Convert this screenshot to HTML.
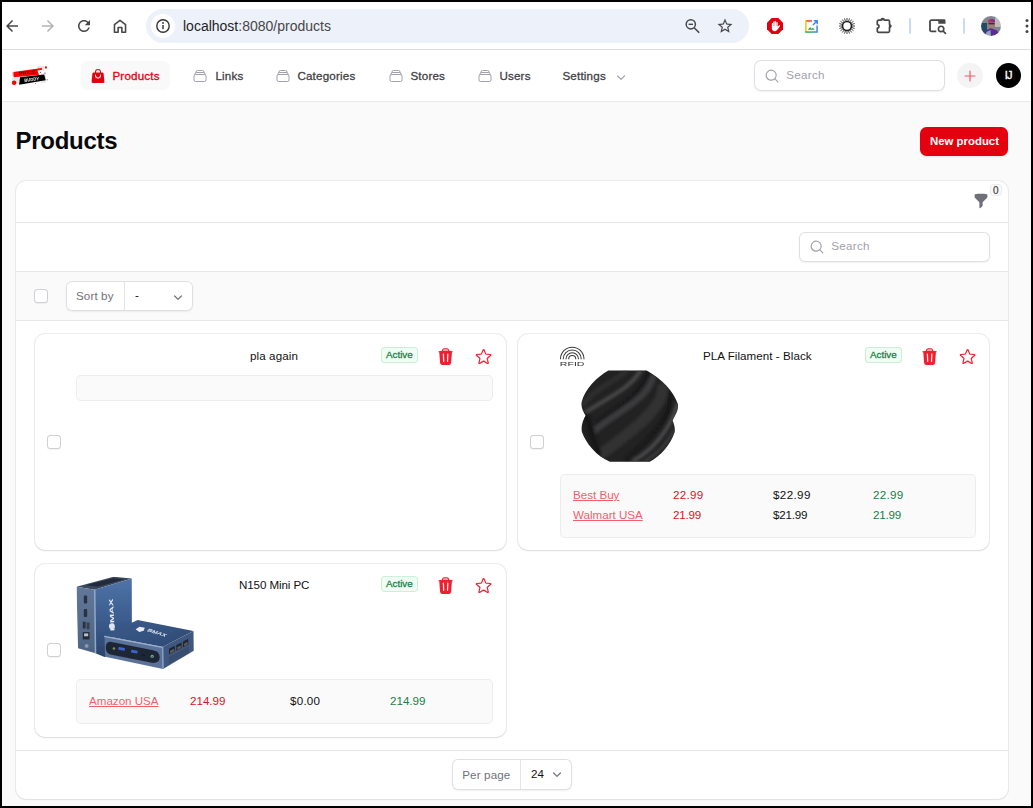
<!DOCTYPE html>
<html lang="en">
<head>
<meta charset="utf-8">
<title>Products</title>
<style>
*{box-sizing:border-box;margin:0;padding:0}
html,body{width:1033px;height:808px;overflow:hidden;background:#000}
body{font-family:"Liberation Sans",Arial,sans-serif;position:relative;color:#18181b}
.abs{position:absolute}
#win{position:absolute;left:2px;top:2px;width:1029px;height:804px;background:#fafafa;overflow:hidden}
/* everything inside #win positioned with page coordinates minus 2 */
#pg{position:absolute;left:-2px;top:-2px;width:1033px;height:808px}
#chrome{position:absolute;left:0;top:0;width:1033px;height:49px;background:#fff}
#chromeline{position:absolute;left:0;top:49px;width:1033px;height:1px;background:#dcdcdc}
#urlpill{position:absolute;left:146px;top:9px;width:603px;height:34px;border-radius:17px;background:#edf1fa}
#infoc{position:absolute;left:151px;top:14px;width:24px;height:24px;border-radius:12px;background:#fff}
.t{position:absolute;white-space:nowrap;line-height:1}
#nav{position:absolute;left:0;top:50px;width:1033px;height:51px;background:#fff}
#navline{position:absolute;left:0;top:101px;width:1033px;height:1px;background:#e9e9eb}
.navt{font-size:11.6px;font-weight:400;color:#3f3f46;-webkit-text-stroke:.3px currentColor;letter-spacing:.2px;margin-left:.4px}
svg{position:absolute;overflow:visible;z-index:2}
.t{z-index:3}
#panel{position:absolute;left:16px;top:181px;width:992px;height:618px;background:#fff;border-radius:10px;box-shadow:0 0 0 1px rgba(9,9,11,.06),0 1px 2px rgba(0,0,0,.05)}
.hl{position:absolute;left:16px;width:992px;height:1px;background:#e7e7ea}
.card{position:absolute;background:#fff;border-radius:10px;box-shadow:0 0 0 1px rgba(9,9,11,.07),0 1px 2px rgba(0,0,0,.08)}
.inner{position:absolute;background:#fafafa;border-radius:5px;box-shadow:inset 0 0 0 1px rgba(9,9,11,.06)}
.cb{position:absolute;width:14px;height:14px;border-radius:3.5px;background:#fff;box-shadow:inset 0 0 0 1px #cfcfd4,0 1px 1px rgba(0,0,0,.05)}
.inp{position:absolute;background:#fff;border-radius:6px;box-shadow:inset 0 0 0 1px #e0e0e4,0 1px 2px rgba(0,0,0,.06)}
.badge{position:absolute;width:37px;height:16px;border-radius:4px;background:#f0fdf4;box-shadow:inset 0 0 0 1px #cdeed9}
.b{font-size:11.6px;color:#111}
.lnk{font-size:11.6px;color:#f0606c;text-decoration:underline;text-underline-offset:1px}
.red{font-size:11.6px;color:#e0101f;letter-spacing:.12px}
.grn{font-size:11.6px;color:#168046;letter-spacing:.12px}
</style>
</head>
<body>
<div id="win"><div id="pg">

<!-- ===== browser chrome ===== -->
<div id="chrome"></div>
<div id="chromeline"></div>
<div id="urlpill"></div>
<div id="infoc"></div>
<span class="t" id="url" style="left:183px;top:19px;font-size:14px;color:#1f1f1f">localhost<span style="color:#474747">:8080/products</span></span>


<!-- chrome icons -->
<svg style="left:3px;top:17px" width="18" height="18" viewBox="0 0 24 24"><path fill="#474747" d="M20 11H7.83l5.59-5.59L12 4l-8 8 8 8 1.41-1.41L7.83 13H20v-2z"/></svg>
<svg style="left:39px;top:17px" width="18" height="18" viewBox="0 0 24 24"><path fill="#b4b4b4" d="M4 11h12.17l-5.59-5.59L12 4l8 8-8 8-1.41-1.41L16.17 13H4v-2z"/></svg>
<svg style="left:75px;top:17px" width="18" height="18" viewBox="0 0 24 24"><path fill="#474747" d="M17.65 6.35C16.2 4.9 14.21 4 12 4c-4.42 0-7.99 3.58-7.99 8s3.57 8 7.99 8c3.73 0 6.84-2.55 7.73-6h-2.08c-.82 2.33-3.04 4-5.65 4-3.31 0-6-2.69-6-6s2.69-6 6-6c1.66 0 3.14.69 4.22 1.78L13 11h7V4l-2.35 2.35z"/></svg>
<svg style="left:111px;top:17px" width="18" height="18" viewBox="0 0 24 24"><path fill="none" stroke="#474747" stroke-width="2.1" stroke-linejoin="round" d="M4.6 20.4V10.2L12 4.4l7.4 5.800V20.4h-4.9v-6.3h-5v6.3z"/></svg>
<svg style="left:155px;top:18px" width="16" height="16" viewBox="0 0 16 16"><circle cx="8" cy="8" r="6.2" fill="none" stroke="#333" stroke-width="1.4"/><rect x="7.3" y="7" width="1.4" height="4.2" fill="#333"/><circle cx="8" cy="5" r=".9" fill="#333"/></svg>
<svg style="left:684px;top:18px" width="17" height="17" viewBox="0 0 17 17"><circle cx="6.8" cy="6.3" r="4.6" fill="none" stroke="#474747" stroke-width="1.5"/><path d="M10.2 9.8l5 5" stroke="#474747" stroke-width="1.6" fill="none"/><path d="M4.6 6.3h4.4" stroke="#474747" stroke-width="1.4"/></svg>
<svg style="left:716px;top:17px" width="18" height="18" viewBox="0 0 24 24"><path fill="#474747" d="M22 9.24l-7.19-.62L12 2 9.190 8.630 2 9.240l5.460 4.730L5.820 21 12 17.270 18.180 21l-1.630-7.030L22 9.240zM12 15.400l-3.760 2.270 1-4.280-3.320-2.880 4.380-.38L12 6.100l1.710 4.040 4.380.38-3.320 2.880 1 4.280L12 15.400z"/></svg>
<!-- adblock -->
<svg style="left:767px;top:18px" width="16" height="16" viewBox="0 0 16 16"><path fill="#e0000f" d="M4.700 0h6.600L16 4.700v6.600L11.300 16H4.700L0 11.300V4.700z"/><g stroke="#fff" stroke-linecap="round" fill="none"><path stroke-width="1.250" d="M5.500 8.500V5.400M7 8.500V3.800M8.500 8.500V3.500M10 8.500V4.500"/><path stroke-width="1.400" d="M10.400 10.600L12.300 7.900"/></g><path fill="#fff" d="M4.850 8h5.800v2.300c0 1.700-1.200 2.900-2.900 2.900s-2.900-1.200-2.900-2.900z"/></svg>
<!-- google image ext -->
<svg style="left:804.500px;top:19.500px" width="13" height="13" viewBox="0 0 14 14"><path d="M1 1h6.500" stroke="#ea4335" stroke-width="1.6" fill="none"/><path d="M1 .2v12.800" stroke="#fbbc04" stroke-width="1.600" fill="none"/><path d="M.2 13h9" stroke="#34a853" stroke-width="1.600" fill="none"/><path d="M13 13V6M9 13h4.800" stroke="#4285f4" stroke-width="1.600" fill="none"/><path d="M8.500 5.500L13 1M9.500.8H13.200V4.500" stroke="#4285f4" stroke-width="1.500" fill="none"/><path d="M3 10.500l2.500-3 1.800 2 1.200-1.200 2 2.200z" fill="#34a853"/></svg>
<!-- sun/dark icon -->
<svg style="left:839px;top:18px" width="16" height="16" viewBox="0 0 16 16"><path d="M13.20 8.00L16.00 8.00M12.95 9.61L15.61 10.47M12.21 11.06L14.47 12.70M11.06 12.21L12.70 14.47M9.61 12.95L10.47 15.61M8.00 13.20L8.00 16.00M6.39 12.95L5.53 15.61M4.94 12.21L3.30 14.47M3.79 11.06L1.53 12.70M3.05 9.61L0.39 10.47M2.80 8.00L0.00 8.00M3.05 6.39L0.39 5.53M3.79 4.94L1.53 3.30M4.94 3.79L3.30 1.53M6.39 3.05L5.53 0.39M8.00 2.80L8.00 0.00M9.61 3.05L10.47 0.39M11.06 3.79L12.70 1.53M12.21 4.94L14.47 3.30M12.95 6.39L15.61 5.53" stroke="#222" stroke-width=".85" fill="none"/><circle cx="8" cy="8" r="4.500" fill="none" stroke="#222" stroke-width="1.700"/></svg>
<!-- puzzle -->
<svg style="left:874.500px;top:15.500px" width="18" height="18" viewBox="0 0 18 18"><path fill="none" stroke="#474747" stroke-width="1.700" stroke-linejoin="round" d="M2.300 5.400a1.300 1.300 0 0 1 1.300-1.300H6.200a1.500 1.500 0 1 1 3 0H13.200a1.300 1.300 0 0 1 1.300 1.300V8.600a1.300 1.300 0 1 1 0 2.600V15.100a1.300 1.300 0 0 1-1.300 1.300H3.600a1.300 1.300 0 0 1-1.300-1.300V12a1.700 1.700 0 0 0 0-3.400z"/><circle cx="15" cy="9.900" r="1.200" fill="#474747"/><circle cx="7.700" cy="3.600" r="1" fill="#474747"/></svg>
<div class="abs" style="left:909px;top:18px;width:2px;height:16px;background:#c9dbf8;border-radius:1px"></div>
<div class="abs" style="left:963px;top:18px;width:2px;height:16px;background:#c9dbf8;border-radius:1px"></div>
<!-- tab search -->
<svg style="left:928px;top:18px" width="19" height="17" viewBox="0 0 19 17"><path d="M8.300 13.300H3.400A1.400 1.400 0 0 1 2 11.900V3.600A1.400 1.400 0 0 1 3.400 2.200H11" fill="none" stroke="#474747" stroke-width="1.800"/><path d="M10.300 1.300h5.800a1.400 1.400 0 0 1 1.400 1.400v3h-7.200z" fill="#474747"/><circle cx="13.100" cy="10.900" r="2.700" fill="none" stroke="#474747" stroke-width="1.600"/><path d="M15.100 13l2.800 2.800" stroke="#474747" stroke-width="1.700"/></svg>
<!-- avatar -->
<svg style="left:981px;top:16px" width="20" height="20" viewBox="0 0 20 20"><defs><clipPath id="avc"><circle cx="10" cy="10" r="10"/></clipPath><filter id="avb"><feGaussianBlur stdDeviation=".6"/></filter></defs><g clip-path="url(#avc)"><g filter="url(#avb)"><rect x="-2" y="-2" width="24" height="24" fill="#7f868e"/><rect x="-2" y="7" width="8" height="15" fill="#234b63"/><rect x="14" y="2" width="8" height="9" fill="#bdbcb8"/><path d="M2 22l2-7 5.500-3 6.500 2.500 4 7.500z" fill="#5b2a95"/><path d="M4 22l1.500-6 4-2 .5 8z" fill="#8fa8b6"/><ellipse cx="10.500" cy="8" rx="3.300" ry="4.200" fill="#a07f70"/><rect x="7.500" y="6.800" width="6" height="1.600" fill="#3a2f33"/><path d="M7 5c1-2.600 6-2.600 7 0l-.2 1.300H7.200z" fill="#b72f68"/><path d="M10.500 3l3.300 1 .2 1.800-3.500-.5z" fill="#6a35a8"/></g></g></svg>
<!-- kebab -->
<svg style="left:1024px;top:18px" width="6" height="16" viewBox="0 0 6 16"><circle cx="3" cy="2.500" r="1.500" fill="#474747"/><circle cx="3" cy="8" r="1.500" fill="#474747"/><circle cx="3" cy="13.500" r="1.500" fill="#474747"/></svg>

<!-- ===== app nav ===== -->
<div id="nav"></div>
<div id="navline"></div>
<div class="abs" style="left:81px;top:61px;width:89px;height:29px;border-radius:7px;background:#f9f9f9"></div>
<span class="t navt" id="n1" style="left:112px;top:70px;color:#e3000f">Products</span>
<span class="t navt" id="n2" style="left:215px;top:70px">Links</span>
<span class="t navt" id="n3" style="left:297px;top:70px">Categories</span>
<span class="t navt" id="n4" style="left:410px;top:70px">Stores</span>
<span class="t navt" id="n5" style="left:499px;top:70px">Users</span>
<span class="t navt" id="n6" style="left:562px;top:70px">Settings</span>
<div class="inp" style="left:754px;top:60px;width:191px;height:31px;border-radius:7px"></div>
<span class="t" id="s1" style="left:786.300px;top:69px;font-size:11.6px;color:#a1a1aa;letter-spacing:.3px">Search</span>
<div class="abs" style="left:957px;top:62.700px;width:25.600px;height:25.200px;border-radius:13px;background:#f4f4f5"></div>
<div class="abs" style="left:996px;top:62.700px;width:25px;height:25.200px;border-radius:13px;background:#000"></div>
<span class="t" id="ij" style="left:1004.700px;top:69.500px;font-size:11px;color:#fff;font-weight:400;letter-spacing:-.7px;-webkit-text-stroke:.35px #fff">IJ</span>

<!-- logo -->
<svg style="left:6px;top:60px" width="50" height="32" viewBox="0 0 50 32">
<defs><filter id="lb" x="-10%" y="-10%" width="120%" height="120%"><feGaussianBlur stdDeviation=".35"/></filter></defs>
<g filter="url(#lb)">
<rect x="6.300" y="17.500" width="7.500" height="6.500" fill="#e4e4e4"/>
<rect x="31.500" y="6.200" width="6.300" height="4" fill="#dedede"/>
<rect x="35" y="13" width="5" height="10" fill="#ececec"/>
<polygon points="7.300,12.100 35.800,8 36.100,9.800 31.500,10.500 33,15 7.700,17.300" fill="#ff0000"/>
<polygon points="6.500,12.500 8,12.200 8,16 6.800,16.200" fill="#ff6a6a"/>
<polygon points="14,17.200 38.200,14.500 39.700,20.300 13.100,24.700" fill="#000"/>
<circle cx="8.100" cy="22.700" r="2.250" fill="#ff0000"/>
<circle cx="39.900" cy="7.500" r="1.150" fill="#ff0000"/>
<circle cx="29.500" cy="23.500" r=".5" fill="#ff3030"/>
<circle cx="39" cy="13" r=".6" fill="#333"/><circle cx="34.500" cy="12.300" r=".6" fill="#555"/><circle cx="41.200" cy="19.700" r=".5" fill="#333"/>
<text x="13" y="15.300" font-family="Liberation Sans, sans-serif" font-size="4.600" font-weight="700" fill="#5a0000" transform="rotate(-7 13 15)" textLength="17" lengthAdjust="spacingAndGlyphs">PRICE</text>
<text x="18.500" y="22" font-family="Liberation Sans, sans-serif" font-size="4.600" font-weight="700" fill="#eee" transform="rotate(-7 18 22)" textLength="15" lengthAdjust="spacingAndGlyphs">BUDDY</text>
</g>
</svg>
<!-- nav icons -->
<svg style="left:89.800px;top:68.400px" width="16" height="16" viewBox="0 0 24 24"><path fill-rule="evenodd" clip-rule="evenodd" fill="#e3000f" d="M7.500 6v.750H5.513c-.960 0-1.764.724-1.865 1.679l-1.263 12A1.875 1.875 0 0 0 4.250 22.500h15.500a1.875 1.875 0 0 0 1.865-2.071l-1.263-12a1.875 1.875 0 0 0-1.865-1.679H16.500V6a4.500 4.500 0 1 0-9 0ZM12 3a3 3 0 0 0-3 3v.750h6V6a3 3 0 0 0-3-3Zm-3 8.250a3 3 0 1 0 6 0v-.750a.750.750 0 0 1 1.500 0v.750a4.500 4.500 0 1 1-9 0v-.750a.750.750 0 0 1 1.500 0v.750Z"/></svg>
<svg style="left:192.1px;top:68.2px" width="16" height="16" viewBox="0 0 24 24"><path d="M6 6.878V6a2.25 2.25 0 0 1 2.25-2.250h7.500A2.250 2.250 0 0 1 18 6v.878m-12 0c.235-.083.487-.128.750-.128h10.500c.263 0 .515.045.750.128m-12 0A2.250 2.250 0 0 0 4.500 9v.878m13.500-3A2.250 2.250 0 0 1 19.500 9v.878m0 0a2.246 2.246 0 0 0-.750-.128H5.250c-.263 0-.515.045-.750.128m15 0A2.250 2.250 0 0 1 21 12v6a2.250 2.250 0 0 1-2.250 2.250H5.250A2.250 2.250 0 0 1 3 18v-6c0-.980.626-1.813 1.500-2.122" fill="none" stroke="#a1a1aa" stroke-width="1.500" stroke-linecap="round" stroke-linejoin="round"/></svg>
<svg style="left:274.8px;top:68.2px" width="16" height="16" viewBox="0 0 24 24"><path d="M6 6.878V6a2.25 2.25 0 0 1 2.25-2.250h7.500A2.250 2.250 0 0 1 18 6v.878m-12 0c.235-.083.487-.128.750-.128h10.500c.263 0 .515.045.750.128m-12 0A2.250 2.250 0 0 0 4.500 9v.878m13.500-3A2.250 2.250 0 0 1 19.500 9v.878m0 0a2.246 2.246 0 0 0-.750-.128H5.250c-.263 0-.515.045-.750.128m15 0A2.250 2.250 0 0 1 21 12v6a2.250 2.250 0 0 1-2.250 2.250H5.250A2.250 2.250 0 0 1 3 18v-6c0-.980.626-1.813 1.500-2.122" fill="none" stroke="#a1a1aa" stroke-width="1.500" stroke-linecap="round" stroke-linejoin="round"/></svg>
<svg style="left:388px;top:68.2px" width="16" height="16" viewBox="0 0 24 24"><path d="M6 6.878V6a2.25 2.25 0 0 1 2.25-2.250h7.500A2.250 2.250 0 0 1 18 6v.878m-12 0c.235-.083.487-.128.750-.128h10.500c.263 0 .515.045.750.128m-12 0A2.250 2.250 0 0 0 4.500 9v.878m13.500-3A2.250 2.250 0 0 1 19.500 9v.878m0 0a2.246 2.246 0 0 0-.750-.128H5.250c-.263 0-.515.045-.750.128m15 0A2.250 2.250 0 0 1 21 12v6a2.250 2.250 0 0 1-2.250 2.250H5.250A2.250 2.250 0 0 1 3 18v-6c0-.980.626-1.813 1.500-2.122" fill="none" stroke="#a1a1aa" stroke-width="1.500" stroke-linecap="round" stroke-linejoin="round"/></svg>
<svg style="left:477px;top:68.2px" width="16" height="16" viewBox="0 0 24 24"><path d="M6 6.878V6a2.25 2.25 0 0 1 2.25-2.250h7.500A2.250 2.250 0 0 1 18 6v.878m-12 0c.235-.083.487-.128.750-.128h10.500c.263 0 .515.045.750.128m-12 0A2.250 2.250 0 0 0 4.500 9v.878m13.500-3A2.250 2.250 0 0 1 19.500 9v.878m0 0a2.246 2.246 0 0 0-.750-.128H5.250c-.263 0-.515.045-.750.128m15 0A2.250 2.250 0 0 1 21 12v6a2.250 2.250 0 0 1-2.250 2.250H5.250A2.250 2.250 0 0 1 3 18v-6c0-.980.626-1.813 1.500-2.122" fill="none" stroke="#a1a1aa" stroke-width="1.500" stroke-linecap="round" stroke-linejoin="round"/></svg>
<svg style="left:612.800px;top:68.500px" width="16" height="16" viewBox="0 0 20 20"><path fill="#a1a1aa" fill-rule="evenodd" d="M5.220 8.220a.750.750 0 0 1 1.060 0L10 11.940l3.720-3.720a.750.750 0 1 1 1.060 1.060l-4.250 4.250a.750.750 0 0 1-1.060 0L5.220 9.280a.750.750 0 0 1 0-1.060Z"/></svg>
<svg style="left:763.900px;top:67.500px" width="16" height="16" viewBox="0 0 20 20"><path fill="#a1a1aa" fill-rule="evenodd" d="M9 3.500a5.500 5.500 0 1 0 0 11 5.500 5.500 0 0 0 0-11ZM2 9a7 7 0 1 1 12.452 4.391l3.328 3.329a.750.750 0 1 1-1.060 1.060l-3.329-3.328A7 7 0 0 1 2 9Z"/></svg>
<svg style="left:962px;top:67.500px" width="16" height="16" viewBox="0 0 24 24"><path d="M12 4.500v15m7.500-7.500h-15" fill="none" stroke="#f4586a" stroke-width="1.800" stroke-linecap="round"/></svg>
<!-- ===== page header ===== -->
<span class="t" id="h1" style="left:15.600px;top:128.500px;font-size:24px;font-weight:700;color:#09090b;letter-spacing:-.3px">Products</span>
<div class="abs" style="left:920px;top:127px;width:88px;height:29px;border-radius:6.5px;background:#e3000f;box-shadow:0 1px 2px rgba(0,0,0,.08)"></div>
<span class="t" id="np" style="left:930px;top:136px;font-size:11.4px;font-weight:700;color:#fff">New product</span>

<!-- ===== panel ===== -->
<div id="panel"></div>
<div class="hl" style="top:222px"></div>
<div class="abs" style="left:16px;top:271px;width:992px;height:49px;background:#fafafa"></div>
<div class="hl" style="top:271px"></div>
<div class="hl" style="top:320px"></div>
<div class="hl" style="top:750px"></div>

<!-- filter badge -->
<div class="abs" style="left:990px;top:184px;width:12px;height:12px;border-radius:4px;background:#fafafa;box-shadow:inset 0 0 0 1px #ececee"></div>
<span class="t" id="zero" style="left:993px;top:185.500px;font-size:10px;color:#3f3f46;-webkit-text-stroke:.2px #3f3f46">0</span>

<!-- table search -->
<div class="inp" style="left:799px;top:232px;width:191px;height:30px"></div>
<span class="t" id="s2" style="left:831.300px;top:240px;font-size:11.6px;color:#a1a1aa;letter-spacing:.3px">Search</span>

<!-- sort row -->
<div class="cb" style="left:34px;top:289px"></div>
<div class="inp" style="left:66px;top:281px;width:127px;height:30px"></div>
<div class="abs" style="left:124px;top:282px;width:1px;height:28px;background:#e4e4e7"></div>
<span class="t" id="sb" style="left:76px;top:290px;font-size:11.6px;color:#71717a;letter-spacing:.12px">Sort by</span>
<span class="t" id="dash" style="left:135px;top:289px;font-size:11.6px;color:#111">-</span>

<!-- cards -->
<div class="card" style="left:35px;top:334px;width:471px;height:216px"></div>
<div class="card" style="left:518px;top:334px;width:471px;height:216px"></div>
<div class="card" style="left:35px;top:564px;width:471px;height:173px"></div>

<!-- card 1 -->
<div class="cb" style="left:47px;top:435px"></div>
<span class="t b" id="c1t" style="left:250px;top:350px;letter-spacing:0.1px">pla again</span>
<div class="badge" style="left:381px;top:347px"></div>
<span class="t act" id="a1" style="left:386px;top:350px;font-size:9.8px;font-weight:400;color:#168046;-webkit-text-stroke:.28px #168046">Active</span>
<div class="inner" style="left:76px;top:375px;width:417px;height:26px"></div>

<!-- card 2 -->
<div class="cb" style="left:530px;top:435px"></div>
<span class="t b" id="c2t" style="left:703px;top:350px;letter-spacing:0.05px">PLA Filament - Black</span>
<div class="badge" style="left:865px;top:347px"></div>
<span class="t act" id="a2" style="left:870px;top:350px;font-size:9.8px;font-weight:400;color:#168046;-webkit-text-stroke:.28px #168046">Active</span>
<div class="inner" style="left:560px;top:474px;width:416px;height:64px"></div>
<span class="t lnk" id="l1" style="left:573px;top:489px">Best Buy</span>
<span class="t lnk" id="l2" style="left:573px;top:509px">Walmart USA</span>
<span class="t red" id="r1" style="left:673px;top:489px;letter-spacing:0.3px">22.99</span>
<span class="t red" id="r2" style="left:673px;top:509px;letter-spacing:-0.2px">21.99</span>
<span class="t b" id="d1" style="left:773px;top:489px;letter-spacing:0.38px">$22.99</span>
<span class="t b" id="d2" style="left:773px;top:509px;letter-spacing:-0.2px">$21.99</span>
<span class="t grn" id="g1" style="left:873px;top:489px;letter-spacing:0.3px">22.99</span>
<span class="t grn" id="g2" style="left:873px;top:509px;letter-spacing:-0.2px">21.99</span>

<!-- card 3 -->
<div class="cb" style="left:47px;top:643px"></div>
<span class="t b" id="c3t" style="left:239px;top:579px;letter-spacing:-0.1px">N150 Mini PC</span>
<div class="badge" style="left:381px;top:576px"></div>
<span class="t act" id="a3" style="left:386px;top:579px;font-size:9.8px;font-weight:400;color:#168046;-webkit-text-stroke:.28px #168046">Active</span>
<div class="inner" style="left:76px;top:679px;width:417px;height:45px"></div>
<span class="t lnk" id="l3" style="left:89px;top:695px">Amazon USA</span>
<span class="t red" id="r3" style="left:190px;top:695px;letter-spacing:0px">214.99</span>
<span class="t b" id="d3" style="left:290px;top:695px;letter-spacing:0.25px">$0.00</span>
<span class="t grn" id="g3" style="left:390px;top:695px;letter-spacing:0px">214.99</span>

<!-- table icons -->
<svg style="left:973px;top:193px" width="16" height="16" viewBox="0 0 20 20"><path fill="#6f6f79" fill-rule="evenodd" d="M2.628 1.601C5.028 1.206 7.490 1 10 1s4.973.206 7.372.601a.750.750 0 0 1 .628.740v2.288a2.250 2.250 0 0 1-.659 1.590l-4.682 4.683a2.250 2.250 0 0 0-.659 1.590v3.037c0 .684-.310 1.330-.844 1.757l-1.937 1.550A.750.750 0 0 1 8 18.250v-5.757a2.250 2.250 0 0 0-.659-1.591L2.659 6.220A2.250 2.250 0 0 1 2 4.629V2.340a.750.750 0 0 1 .628-.740Z"/></svg>
<svg style="left:809px;top:239px" width="16" height="16" viewBox="0 0 20 20"><path fill="#a1a1aa" fill-rule="evenodd" d="M9 3.500a5.500 5.500 0 1 0 0 11 5.500 5.500 0 0 0 0-11ZM2 9a7 7 0 1 1 12.452 4.391l3.328 3.329a.750.750 0 1 1-1.060 1.060l-3.329-3.328A7 7 0 0 1 2 9Z"/></svg>
<svg style="left:169.500px;top:288.500px" width="16" height="16" viewBox="0 0 20 20"><path fill="#71717a" fill-rule="evenodd" d="M5.220 8.220a.750.750 0 0 1 1.060 0L10 11.940l3.720-3.720a.750.750 0 1 1 1.060 1.060l-4.250 4.250a.750.750 0 0 1-1.060 0L5.220 9.280a.750.750 0 0 1 0-1.060Z"/></svg>
<svg style="left:548.800px;top:766px" width="16" height="16" viewBox="0 0 20 20"><path fill="#71717a" fill-rule="evenodd" d="M5.220 8.220a.750.750 0 0 1 1.060 0L10 11.940l3.720-3.720a.750.750 0 1 1 1.060 1.060l-4.250 4.250a.750.750 0 0 1-1.060 0L5.220 9.280a.750.750 0 0 1 0-1.060Z"/></svg>
<svg style="left:435.9px;top:346.6px" width="19.200" height="19.200" viewBox="0 0 24 24"><path fill="#ef2030" fill-rule="evenodd" clip-rule="evenodd" d="M16.500 4.478v.227a48.816 48.816 0 0 1 3.878.512.750.750 0 1 1-.256 1.478l-.209-.035-1.005 13.070a3 3 0 0 1-2.991 2.770H8.084a3 3 0 0 1-2.991-2.770L4.087 6.660l-.209.035a.750.750 0 0 1-.256-1.478A48.567 48.567 0 0 1 7.500 4.705v-.227c0-1.564 1.213-2.900 2.816-2.951a52.662 52.662 0 0 1 3.369 0c1.603.051 2.815 1.387 2.815 2.951Zm-6.136-1.452a51.196 51.196 0 0 1 3.273 0C14.390 3.050 15 3.684 15 4.478v.113a49.488 49.488 0 0 0-6 0v-.113c0-.794.609-1.428 1.364-1.452Zm-.355 5.945a.750.750 0 1 0-1.500.058l.347 9a.750.750 0 1 0 1.499-.058l-.346-9Zm5.480.058a.750.750 0 1 0-1.498-.058l-.347 9a.750.750 0 0 0 1.500.058l.345-9Z"/></svg>
<svg style="left:473.9px;top:346.9px" width="19.200" height="19.200" viewBox="0 0 24 24"><path fill="none" stroke="#ef2030" stroke-width="1.500" stroke-linecap="round" stroke-linejoin="round" d="M11.480 3.499a.562.562 0 0 1 1.040 0l2.125 5.111a.563.563 0 0 0 .475.345l5.518.442c.499.040.701.663.321.988l-4.204 3.602a.563.563 0 0 0-.182.557l1.285 5.385a.562.562 0 0 1-.840.610l-4.725-2.885a.562.562 0 0 0-.586 0L6.982 20.540a.562.562 0 0 1-.840-.610l1.285-5.386a.562.562 0 0 0-.182-.557l-4.204-3.602a.562.562 0 0 1 .321-.988l5.518-.442a.563.563 0 0 0 .475-.345L11.480 3.500Z"/></svg>
<svg style="left:919.5px;top:346.6px" width="19.200" height="19.200" viewBox="0 0 24 24"><path fill="#ef2030" fill-rule="evenodd" clip-rule="evenodd" d="M16.500 4.478v.227a48.816 48.816 0 0 1 3.878.512.750.750 0 1 1-.256 1.478l-.209-.035-1.005 13.070a3 3 0 0 1-2.991 2.770H8.084a3 3 0 0 1-2.991-2.770L4.087 6.660l-.209.035a.750.750 0 0 1-.256-1.478A48.567 48.567 0 0 1 7.500 4.705v-.227c0-1.564 1.213-2.900 2.816-2.951a52.662 52.662 0 0 1 3.369 0c1.603.051 2.815 1.387 2.815 2.951Zm-6.136-1.452a51.196 51.196 0 0 1 3.273 0C14.390 3.050 15 3.684 15 4.478v.113a49.488 49.488 0 0 0-6 0v-.113c0-.794.609-1.428 1.364-1.452Zm-.355 5.945a.750.750 0 1 0-1.500.058l.347 9a.750.750 0 1 0 1.499-.058l-.346-9Zm5.480.058a.750.750 0 1 0-1.498-.058l-.347 9a.750.750 0 0 0 1.500.058l.345-9Z"/></svg>
<svg style="left:957.5px;top:346.9px" width="19.200" height="19.200" viewBox="0 0 24 24"><path fill="none" stroke="#ef2030" stroke-width="1.500" stroke-linecap="round" stroke-linejoin="round" d="M11.480 3.499a.562.562 0 0 1 1.040 0l2.125 5.111a.563.563 0 0 0 .475.345l5.518.442c.499.040.701.663.321.988l-4.204 3.602a.563.563 0 0 0-.182.557l1.285 5.385a.562.562 0 0 1-.840.610l-4.725-2.885a.562.562 0 0 0-.586 0L6.982 20.540a.562.562 0 0 1-.840-.610l1.285-5.386a.562.562 0 0 0-.182-.557l-4.204-3.602a.562.562 0 0 1 .321-.988l5.518-.442a.563.563 0 0 0 .475-.345L11.480 3.500Z"/></svg>
<svg style="left:435.9px;top:575.6px" width="19.200" height="19.200" viewBox="0 0 24 24"><path fill="#ef2030" fill-rule="evenodd" clip-rule="evenodd" d="M16.500 4.478v.227a48.816 48.816 0 0 1 3.878.512.750.750 0 1 1-.256 1.478l-.209-.035-1.005 13.070a3 3 0 0 1-2.991 2.770H8.084a3 3 0 0 1-2.991-2.770L4.087 6.660l-.209.035a.750.750 0 0 1-.256-1.478A48.567 48.567 0 0 1 7.500 4.705v-.227c0-1.564 1.213-2.900 2.816-2.951a52.662 52.662 0 0 1 3.369 0c1.603.051 2.815 1.387 2.815 2.951Zm-6.136-1.452a51.196 51.196 0 0 1 3.273 0C14.390 3.050 15 3.684 15 4.478v.113a49.488 49.488 0 0 0-6 0v-.113c0-.794.609-1.428 1.364-1.452Zm-.355 5.945a.750.750 0 1 0-1.500.058l.347 9a.750.750 0 1 0 1.499-.058l-.346-9Zm5.480.058a.750.750 0 1 0-1.498-.058l-.347 9a.750.750 0 0 0 1.500.058l.345-9Z"/></svg>
<svg style="left:473.9px;top:575.9px" width="19.200" height="19.200" viewBox="0 0 24 24"><path fill="none" stroke="#ef2030" stroke-width="1.500" stroke-linecap="round" stroke-linejoin="round" d="M11.480 3.499a.562.562 0 0 1 1.040 0l2.125 5.111a.563.563 0 0 0 .475.345l5.518.442c.499.040.701.663.321.988l-4.204 3.602a.563.563 0 0 0-.182.557l1.285 5.385a.562.562 0 0 1-.840.610l-4.725-2.885a.562.562 0 0 0-.586 0L6.982 20.540a.562.562 0 0 1-.840-.610l1.285-5.386a.562.562 0 0 0-.182-.557l-4.204-3.602a.562.562 0 0 1 .321-.988l5.518-.442a.563.563 0 0 0 .475-.345L11.480 3.500Z"/></svg>
<!-- vase image -->
<svg style="left:550px;top:340px" width="150" height="130" viewBox="0 0 932 808">
<defs>
<filter id="vb" x="-10%" y="-10%" width="120%" height="120%"><feGaussianBlur stdDeviation="11"/></filter>
<filter id="vb3" x="-5%" y="-20%" width="110%" height="140%"><feGaussianBlur stdDeviation="1"/></filter>
<filter id="vb2" x="-5%" y="-5%" width="110%" height="110%"><feGaussianBlur stdDeviation="3"/></filter>
<clipPath id="vc"><path d="M362 190H600C690 240 770 320 795 400C800 440 775 470 762 500C770 520 778 545 775 570C750 650 690 720 620 756H372C290 720 220 640 198 570C192 530 205 500 222 470C205 440 192 420 197 385C215 310 290 230 362 190Z"/></clipPath>
</defs>
<g filter="url(#vb2)">
<path d="M362 190H600C690 240 770 320 795 400C800 440 775 470 762 500C770 520 778 545 775 570C750 650 690 720 620 756H372C290 720 220 640 198 570C192 530 205 500 222 470C205 440 192 420 197 385C215 310 290 230 362 190Z" fill="#222223"/>
</g>
<g clip-path="url(#vc)" filter="url(#vb)" fill="none" stroke-linecap="round">
<path d="M560 195C480 320 330 370 215 455" stroke="#484849" stroke-width="24"/>
<path d="M470 195C400 260 280 300 205 400" stroke="#2e2e2f" stroke-width="30"/>
<path d="M640 235C590 390 400 450 270 570" stroke="#3b3b3d" stroke-width="40"/>
<path d="M700 300C700 420 520 560 330 700" stroke="#303032" stroke-width="70"/>
<path d="M792 400C745 560 640 680 520 750" stroke="#505052" stroke-width="20"/>
<path d="M772 560C720 660 650 720 590 752" stroke="#3e3e40" stroke-width="16"/>
<path d="M610 200C570 340 430 410 290 510" stroke="#131314" stroke-width="20"/>
<path d="M220 470C260 520 250 600 300 700" stroke="#161617" stroke-width="40"/>
<path d="M745 330C765 450 655 600 475 740" stroke="#131314" stroke-width="24"/>
</g>
<!-- rfid -->
<g fill="none" stroke="#3a3a3a" stroke-width="6.500">
<path d="M65 119V118a73 73 0 0 1 146 0V119"/>
<path d="M82 119V118a56 56 0 0 1 112 0V119"/>
<path d="M99 119V118a39 39 0 0 1 78 0V119"/>
<path d="M116 119V118a22 22 0 0 1 44 0V119"/>
</g>
<text x="61" y="160" filter="url(#vb3)" font-family="Liberation Sans, sans-serif" font-size="36" fill="#333" textLength="153" lengthAdjust="spacingAndGlyphs">RFID</text>
</svg>
<!-- mini pc image -->
<svg style="left:70px;top:570px" width="130" height="105" viewBox="0 0 1000 808">
<defs>
<filter id="pb" x="-5%" y="-5%" width="110%" height="110%"><feGaussianBlur stdDeviation="3.500"/></filter>
<linearGradient id="pg1" x1="0" y1="0" x2="0" y2="1"><stop offset="0" stop-color="#4f74a8"/><stop offset=".55" stop-color="#3a5a8c"/><stop offset="1" stop-color="#2b446c"/></linearGradient>
<linearGradient id="pg2" x1="0" y1="0" x2="1" y2="1"><stop offset="0" stop-color="#3c5b8b"/><stop offset="1" stop-color="#2f4a75"/></linearGradient>
<linearGradient id="pg3" x1="0" y1="0" x2="0" y2="1"><stop offset="0" stop-color="#62789a"/><stop offset="1" stop-color="#4d6383"/></linearGradient>
</defs>
<g filter="url(#pb)">
<!-- vertical box -->
<polygon points="50,128 335,52 475,66 190,152" fill="#3b4a5f"/>
<polygon points="120,118 330,64 420,72 215,128" fill="#222c3a"/>
<polygon points="190,152 475,66 476,440 320,520 270,672 196,640" fill="url(#pg1)"/>
<polygon points="50,128 190,152 196,640 62,602" fill="url(#pg3)"/>
<polygon points="184,152 196,152 202,640 190,638" fill="#8fa6c4"/>
<rect x="106" y="196" width="26" height="62" rx="8" fill="#2a3240"/>
<rect x="106" y="300" width="26" height="62" rx="8" fill="#2a3240"/>
<rect x="98" y="398" width="22" height="52" fill="#2a3240"/><rect x="128" y="404" width="22" height="52" fill="#39414e"/>
<rect x="98" y="478" width="52" height="56" fill="#232a35"/><rect x="108" y="488" width="32" height="22" fill="#b9c0c8"/>
<circle cx="128" cy="584" r="15" fill="#8d98a6"/>
<text x="0" y="0" transform="translate(343 470) rotate(-93)" font-family="Liberation Sans, sans-serif" font-size="44" font-weight="700" fill="#e6ebf2" textLength="250" lengthAdjust="spacingAndGlyphs">BMAX</text>
<circle cx="322" cy="432" r="22" fill="#dfe5ee"/>
<!-- horizontal box -->
<polygon points="265,505 520,385 950,470 712,592" fill="url(#pg2)"/>
<polygon points="265,505 712,592 716,762 270,668" fill="#5a7298"/>
<polygon points="712,592 950,470 952,622 716,762" fill="#41597f"/>
<polygon points="262,505 712,590 712,600 262,515" fill="#9db2cf"/>
<polygon points="706,592 718,590 722,762 710,760" fill="#86a0c4"/>
<path d="M310 552L640 618Q690 630 690 672T640 716L310 650Q275 640 275 596T310 552Z" fill="#1f2836"/>
<rect x="372" y="596" width="50" height="22" rx="4" fill="#3f62d0" transform="rotate(11 397 607)"/>
<rect x="470" y="617" width="50" height="22" rx="4" fill="#3f62d0" transform="rotate(11 495 628)"/>
<circle cx="338" cy="604" r="10" fill="#7d8a5c"/><circle cx="632" cy="664" r="12" fill="#7fb3a2"/><circle cx="632" cy="664" r="5" fill="#1f2836"/>
<rect x="552" y="650" width="26" height="9" rx="4" fill="#0f141c" transform="rotate(11 565 654)"/>
<polygon points="762,606 806,583 806,626 762,650" fill="#1d2531"/>
<polygon points="818,578 858,557 858,600 818,622" fill="#1d2531"/>
<polygon points="870,551 910,530 910,574 870,595" fill="#1d2531"/>
<polygon points="770,622 800,606 800,626 770,642" fill="#6b5a4a"/><polygon points="826,594 852,580 852,600 826,614" fill="#6b5a4a"/><polygon points="878,567 904,553 904,573 878,587" fill="#6b5a4a"/>
<polygon points="760,668 915,588 915,640 760,722" fill="#384e70"/>
<text x="0" y="0" transform="translate(588 470) rotate(17) skewX(-30)" font-family="Liberation Sans, sans-serif" font-size="34" font-weight="700" fill="#e6ebf2" textLength="150" lengthAdjust="spacingAndGlyphs">BMAX</text>
<path d="M505 455l30-18 40 8-8 22-34 10z" fill="#e6ebf2"/>
</g>
</svg>
<!-- footer per page -->
<div class="inp" style="left:452px;top:759px;width:120px;height:31px"></div>
<div class="abs" style="left:520px;top:760px;width:1px;height:29px;background:#e4e4e7"></div>
<span class="t" id="pp" style="left:462.200px;top:769px;font-size:11.6px;color:#71717a;letter-spacing:.15px">Per page</span>
<span class="t" id="n24" style="left:531px;top:768px;font-size:11.6px;color:#111">24</span>

</div></div>
</body>
</html>
